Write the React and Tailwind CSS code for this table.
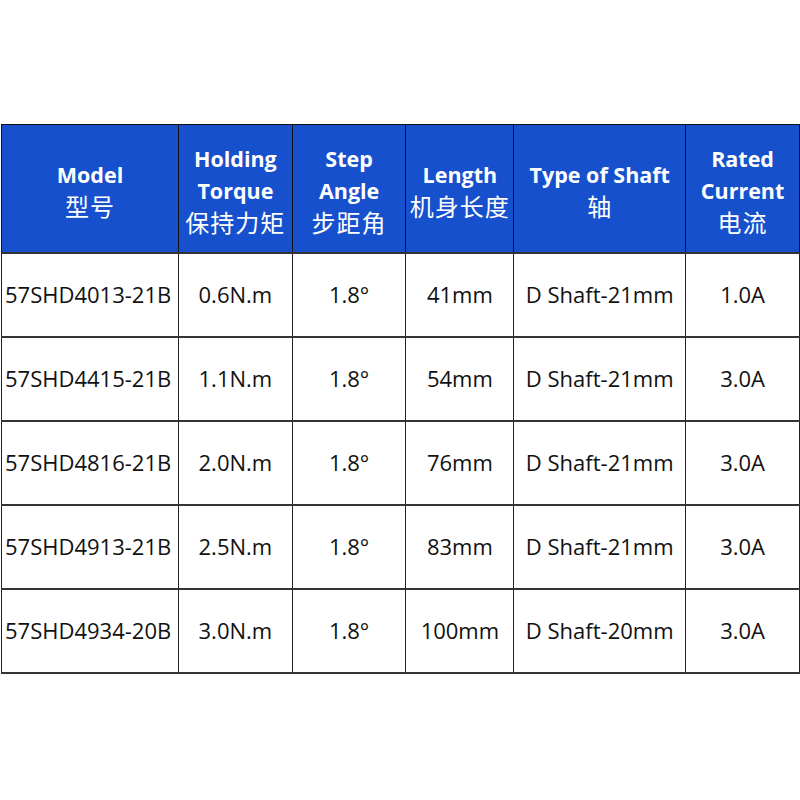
const rows = [
  ["57SHD4013-21B", "0.6N.m", "1.8°", "41mm", "D Shaft-21mm", "1.0A"],
  ["57SHD4415-21B", "1.1N.m", "1.8°", "54mm", "D Shaft-21mm", "3.0A"],
  ["57SHD4816-21B", "2.0N.m", "1.8°", "76mm", "D Shaft-21mm", "3.0A"],
  ["57SHD4913-21B", "2.5N.m", "1.8°", "83mm", "D Shaft-21mm", "3.0A"],
  ["57SHD4934-20B", "3.0N.m", "1.8°", "100mm", "D Shaft-20mm", "3.0A"],
];

const headers = [
  { en: ["Model"], zh: "型号" },
  { en: ["Holding", "Torque"], zh: "保持力矩" },
  { en: ["Step", "Angle"], zh: "步距角" },
  { en: ["Length"], zh: "机身长度" },
  { en: ["Type of Shaft"], zh: "轴" },
  { en: ["Rated", "Current"], zh: "电流" },
];

const widths = ["w-[177px]", "w-[114px]", "w-[114px]", "w-[108px]", "w-[172px]", "w-[114px]"];

export default function App() {
  return (
    <div className="w-[800px] h-[800px] bg-white pt-[124px] font-['Open_Sans','Noto_Sans_CJK_SC',sans-serif]">
      <table className="border-collapse table-fixed ml-px">
        <thead>
          <tr className="h-[128px] bg-[#1650cc] text-white">
            {headers.map((h, i) => (
              <th
                key={i}
                className={`${widths[i]} border border-[#111] text-center align-middle p-0 pt-[4px]`}
              >
                {h.en.map((t) => (
                  <div key={t} className="text-[21.5px] font-bold leading-[32px] whitespace-nowrap">
                    {t}
                  </div>
                ))}
                <div className="text-[24px] font-normal leading-[30px] tracking-[1px] font-['Noto_Sans_CJK_SC',sans-serif]">
                  {h.zh}
                </div>
              </th>
            ))}
          </tr>
        </thead>
        <tbody>
          {rows.map((r) => (
            <tr key={r[0]} className="h-[84px]">
              {r.map((c, i) => (
                <td
                  key={i}
                  className={`${widths[i]} border-x border-x-[#222] border-y-2 border-y-[#333] text-center align-middle text-[22px] text-[#111] p-0 whitespace-nowrap ${i === 0 ? "text-left pl-[3px]" : ""}`}
                >
                  {c}
                </td>
              ))}
            </tr>
          ))}
        </tbody>
      </table>
    </div>
  );
}
